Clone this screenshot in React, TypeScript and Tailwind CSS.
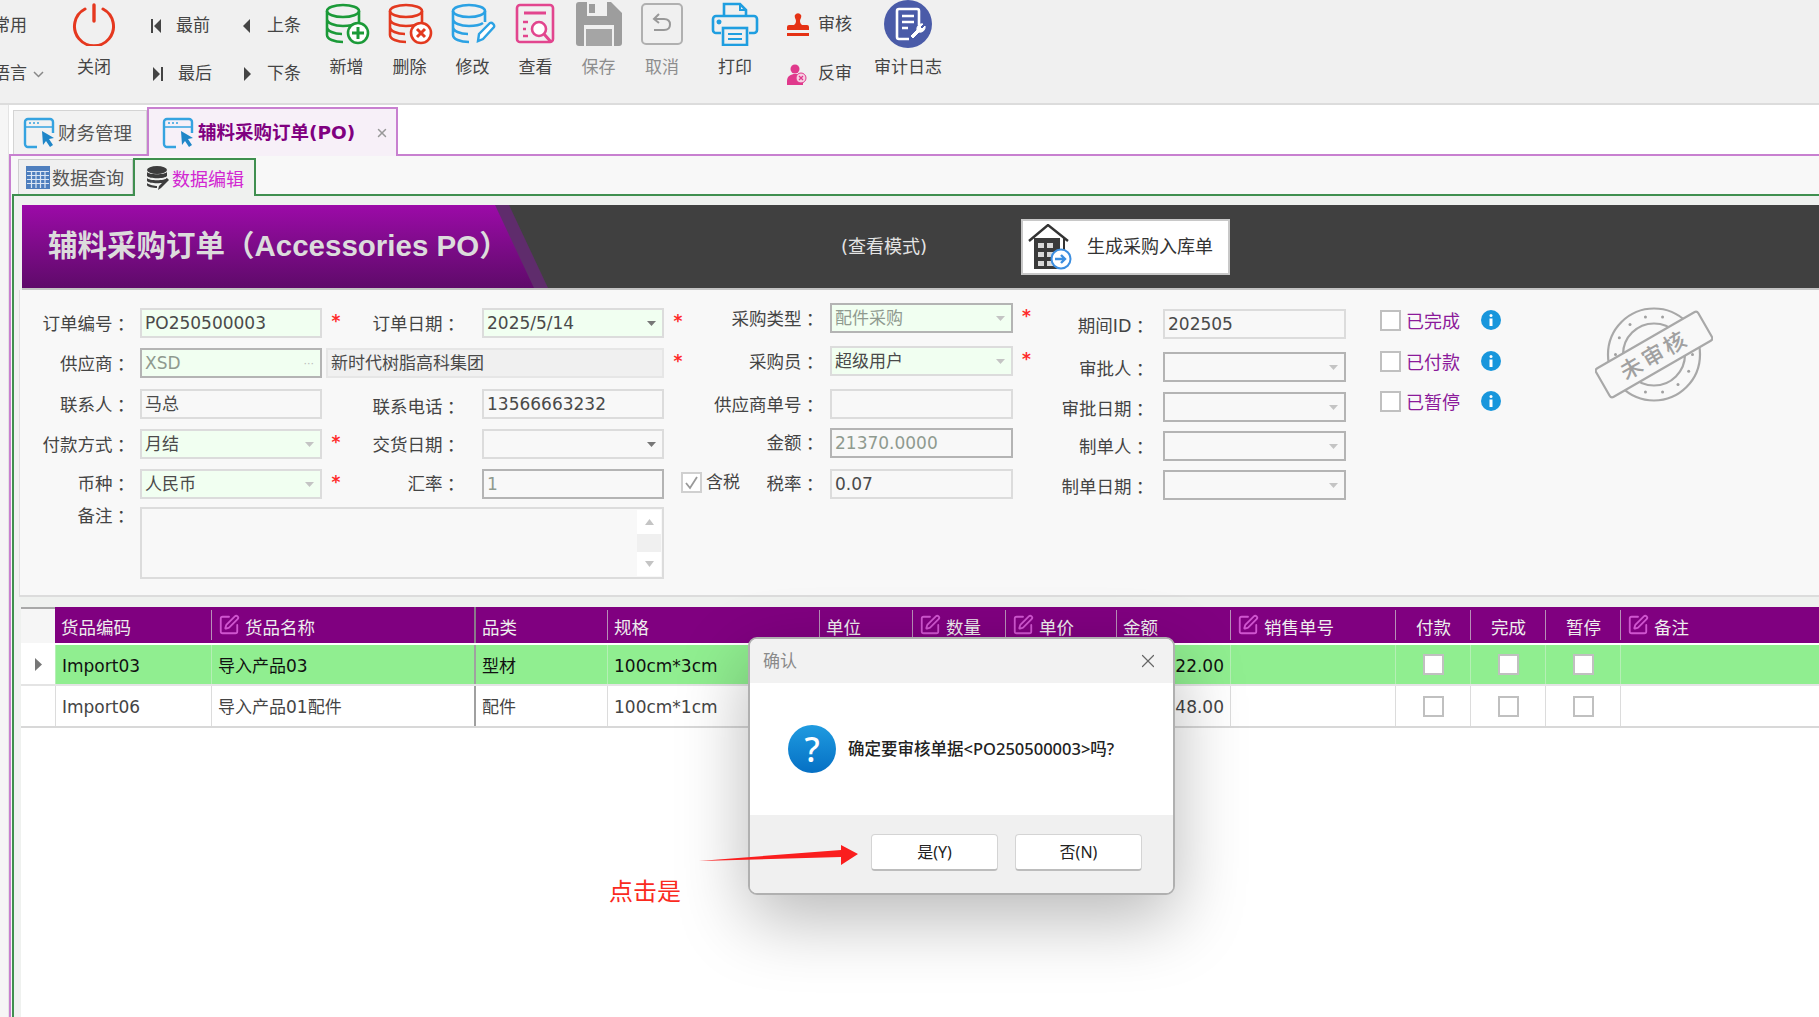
import React from 'react';
import clsx from 'clsx';
import { SquarePen, X } from 'lucide-react';

// 工具栏图标
const PowerIcon = () => (
  <svg width="44" height="44" viewBox="0 0 44 44" fill="none" stroke="#e5381f" strokeWidth="3" strokeLinecap="round">
    <path d="M13 7a19.5 19.5 0 1 0 18 0" />
    <path d="M22 3v16" strokeWidth="3.4" />
  </svg>
);

const DbIcon: React.FC<{ color: string; badge?: 'plus' | 'x' | 'pen' }> = ({ color, badge }) => (
  <svg width="46" height="42" viewBox="0 0 46 42" fill="none" stroke={color} strokeWidth="2.6">
    <ellipse cx="19" cy="8" rx="16" ry="6" />
    <path d="M3 8v24c0 4 7 7 16 7M35 8v11M3 16c0 4 7 7 16 7 6 0 11-1 14-3M3 24c0 4 7 7 15 7" />
    {badge === 'pen' ? (
      <path d="M28 38l1-7 11-11c2-1 5 2 4 4L33 36z" fill="white" strokeWidth="2.4" />
    ) : (
      <>
        <circle cx="34" cy="30" r="10" fill="white" />
        {badge === 'plus' && <path d="M34 24v12M28 30h12" strokeWidth="3" />}
        {badge === 'x' && <path d="M30 26l8 8M38 26l-8 8" strokeWidth="3" />}
      </>
    )}
  </svg>
);

const ViewIcon = () => (
  <svg width="42" height="44" viewBox="0 0 42 44" fill="none" stroke="#e2458e" strokeWidth="2.6">
    <rect x="2" y="3" width="36" height="37" rx="3" />
    <path d="M9 11h22" strokeWidth="3" />
    <path d="M8 20h5M8 27h3M8 34h5" />
    <circle cx="24" cy="27" r="7" fill="white" />
    <path d="M29 32l7 8" strokeWidth="3" />
  </svg>
);

const SaveIcon = () => (
  <svg width="46" height="44" viewBox="0 0 46 44" fill="#9d9d9d">
    <path d="M3 0h32l11 11v30a3 3 0 0 1-3 3H3a3 3 0 0 1-3-3V3a3 3 0 0 1 3-3z" />
    <rect x="11" y="0" width="20" height="14" fill="#f0f0f0" />
    <rect x="13" y="2" width="6" height="9" fill="#9d9d9d" />
    <rect x="8" y="23" width="30" height="21" fill="#f0f0f0" />
    <rect x="10" y="27" width="26" height="17" fill="#a5a5a5" />
  </svg>
);

const CancelIcon = () => (
  <svg width="42" height="42" viewBox="0 0 42 42" fill="none" stroke="#b0b0b0" strokeWidth="2">
    <rect x="1" y="1" width="40" height="40" rx="4" />
    <path d="M18 11l-5 5 5 4" stroke="#999" />
    <path d="M13 16h10c4 0 6 2.500 6 5.500S27 27 23 27H13" stroke="#999" />
  </svg>
);

const PrintIcon = () => (
  <svg width="48" height="44" viewBox="0 0 48 44" fill="none" stroke="#1f9ee0" strokeWidth="2.6">
    <path d="M13 14V2h16l6 6v6" />
    <path d="M29 2v6h6" strokeWidth="2" />
    <path d="M10 31H5a3 3 0 0 1-3-3V17a3 3 0 0 1 3-3h38a3 3 0 0 1 3 3v11a3 3 0 0 1-3 3h-5" />
    <rect x="12" y="26" width="24" height="17" />
    <path d="M17 32h14M17 37h14" strokeWidth="2.2" />
    <circle cx="8" cy="20" r="1.200" fill="#1f9ee0" />
  </svg>
);

const StampRed = () => (
  <svg width="22" height="24" viewBox="0 0 22 24" fill="#e53215">
    <path d="M8 2a3.500 3.500 0 0 1 6 0c1 2-1 4-1 6s1 3 2 4h5a2 2 0 0 1 2 2v3H0v-3a2 2 0 0 1 2-2h5c1-1 2-2 2-4s-2-4-1-6z" />
    <rect x="0" y="20" width="22" height="3" />
  </svg>
);

const UserX = () => (
  <svg width="20" height="21" viewBox="0 0 20 21">
    <circle cx="8" cy="5" r="4.500" fill="#e0398c" />
    <path d="M0 21v-4c0-5 4-7 8-7s8 2 8 7v4z" fill="#e0398c" />
    <circle cx="14" cy="14" r="5" fill="#f6d0e2" stroke="#e0398c" />
    <path d="M12 12l4 4M16 12l-4 4" stroke="#e0398c" strokeWidth="1.300" />
  </svg>
);

const AuditIcon = () => (
  <svg width="48" height="48" viewBox="0 0 48 48" fill="none">
    <circle cx="24" cy="24" r="24" fill="#4a5ba8" />
    <path d="M35 25V11a2 2 0 0 0-2-2H15a2 2 0 0 0-2 2v26a2 2 0 0 0 2 2h10" stroke="white" strokeWidth="2.6" />
    <path d="M18 16h12M18 22h12M18 28h6" stroke="white" strokeWidth="2.4" />
    <path d="M27 36l6-6a5 5 0 0 1 6-6l-3 3 2 2 3-3a5 5 0 0 1-6 6l-6 6z" fill="white" stroke="white" />
  </svg>
);

const WindowIcon = () => (
  <svg width="33" height="32" viewBox="0 0 33 32" fill="none">
    <path d="M14 30H5a3 3 0 0 1-3-3V5a3 3 0 0 1 3-3h22a3 3 0 0 1 3 3v11" stroke="#35a3e0" strokeWidth="2.400" />
    <path d="M2 10h28" stroke="#35a3e0" strokeWidth="1.500" />
    <path d="M6 6h2M10 6h2M14 6h2" stroke="#35a3e0" strokeWidth="1.500" />
    <path d="M19 14l12 7-5 1 4 6-3 2-4-6-3 4z" fill="#1f86c8" />
  </svg>
);

const GridIcon = () => (
  <svg width="24" height="23" viewBox="0 0 24 23">
    <rect width="24" height="23" fill="#4f7fbe" />
    <path d="M1 5.500h22M1 9.500h22M1 13.500h22M1 17.500h22M5.500 5v17M10 5v17M14.500 5v17M19 5v17" stroke="#dbe6f4" strokeWidth="1.200" />
  </svg>
);

const DbDark = () => (
  <svg width="22" height="25" viewBox="0 0 22 25" fill="#3c3c3c">
    <ellipse cx="10" cy="4" rx="10" ry="4" />
    <path d="M0 6c2 3 18 3 20 0v4c-2 3-18 3-20 0zM0 12c2 3 18 3 20 0v3c-2 3-18 3-20 0zM0 17c2 2 8 3 10 3v2c-4 0-10-1-10-3z" />
    <path d="M11 24l1-4 8-8 2 2-8 8z" />
  </svg>
);

const BuildingIcon = () => (
  <svg width="44" height="46" viewBox="0 0 44 46" fill="none">
    <path d="M1 17L20 1l20 16" stroke="#333" strokeWidth="2.400" />
    <path d="M36 14v12" stroke="#333" strokeWidth="2" />
    <rect x="6" y="14" width="26" height="31" fill="#3a3a3a" />
    <path d="M10 19h6v5h-6zM19 19h6v5h-6zM10 28h6v5h-6zM19 28h6v5h-6zM10 37h6v5h-6zM19 37h6v5h-6z" fill="#d8d8d8" />
    <circle cx="33" cy="35" r="9.500" fill="white" stroke="#3b8ee0" strokeWidth="2" />
    <path d="M27 35h10M33 31l4 4-4 4" stroke="#3b8ee0" strokeWidth="2.400" />
  </svg>
);

const InfoIcon = () => (
  <svg width="20" height="20" viewBox="0 0 20 20">
    <circle cx="10" cy="10" r="10" fill="#1896dc" />
    <circle cx="10" cy="5.500" r="1.500" fill="white" />
    <rect x="8.500" y="8.500" width="3" height="7.500" fill="white" />
  </svg>
);

const SealIcon = () => {
  const dots = Array.from({ length: 14 }, (_, i) => (i * Math.PI * 2) / 14);
  return (
    <svg width="118" height="95" viewBox="0 0 118 95" fill="none">
      <circle cx="59" cy="47.500" r="46" stroke="#a8a8a8" strokeWidth="2.200" />
      <circle cx="59" cy="47.500" r="31" stroke="#a8a8a8" strokeWidth="2.200" />
      {dots.map((a) => (
        <circle key={a} cx={59 + 38.500 * Math.cos(a)} cy={47.500 + 38.500 * Math.sin(a)} r="1.500" fill="#a0a0a0" />
      ))}
      <g transform="rotate(-30 59 47.500)">
        <rect x="0" y="31" width="118" height="33" rx="3" fill="#f8f8f8" stroke="#a8a8a8" strokeWidth="2.200" />
        <text x="59" y="56" textAnchor="middle" fontSize="22" fontWeight="500" letterSpacing="3" fill="#a0a0a0" fontFamily="Noto Sans CJK SC, sans-serif">未审核</text>
      </g>
    </svg>
  );
};

// 工具栏按钮
const ToolBtn: React.FC<{ label: string; className: string; gray?: boolean; children: React.ReactNode }> = ({ label, className, gray, children }) => (
  <div className={clsx('flex shrink-0 flex-col items-center', className)}>
    <div className="flex h-[48px] items-center">{children}</div>
    <span className={clsx('mt-[7px] text-[17px] leading-[24px]', gray ? 'text-[#8d8d8d]' : 'text-[#444]')}>{label}</span>
  </div>
);

const Nav: React.FC<{ label: string; d: string; className?: string }> = ({ label, d, className }) => (
  <div className={clsx('flex h-[48px] items-center', className)}>
    <svg width="12" height="16" viewBox="0 0 12 16" fill="#444"><path d={d} /></svg>
    <span className="ml-[14px] text-[17px] text-[#444]">{label}</span>
  </div>
);

const Toolbar = () => (
  <div className="flex h-[105px] shrink-0 overflow-hidden border-b-2 border-[#dcdcdc] bg-[#f0f0f0]">
    <div className="-ml-[7px] w-[71px] shrink-0 pt-[2px] text-[17px] text-[#444]">
      <div className="flex h-[48px] items-center">常用</div>
      <div className="flex h-[48px] items-center">
        语言
        <svg className="ml-[6px]" width="11" height="7" viewBox="0 0 11 7" fill="none" stroke="#888" strokeWidth="1.500"><path d="M1 1l4.500 4.500L10 1" /></svg>
      </div>
    </div>
    <ToolBtn label="关闭" className="w-[60px]"><PowerIcon /></ToolBtn>
    <div className="ml-[26px] w-[91px] shrink-0 pt-[2px]">
      <Nav label="最前" d="M1 1h2v14H1zM11 1v14L4 8z" />
      <Nav label="最后" className="pl-[2px]" d="M9 1h2v14H9zM1 1v14l7-7z" />
    </div>
    <div className="w-[74px] shrink-0 pt-[2px]">
      <Nav label="上条" d="M9 1v14L2 8z" />
      <Nav label="下条" d="M3 1v14l7-7z" />
    </div>
    <ToolBtn label="新增" className="w-[63px]"><DbIcon color="#1b9a38" badge="plus" /></ToolBtn>
    <ToolBtn label="删除" className="w-[63px]"><DbIcon color="#e3391f" badge="x" /></ToolBtn>
    <ToolBtn label="修改" className="w-[63px]"><DbIcon color="#2ca2e4" badge="pen" /></ToolBtn>
    <ToolBtn label="查看" className="w-[63px]"><ViewIcon /></ToolBtn>
    <ToolBtn label="保存" gray className="w-[63px]"><SaveIcon /></ToolBtn>
    <ToolBtn label="取消" gray className="w-[64px]"><CancelIcon /></ToolBtn>
    <ToolBtn label="打印" className="w-[82px]"><PrintIcon /></ToolBtn>
    <div className="ml-[11px] w-[71px] shrink-0 pt-[1px] text-[17px] text-[#444]">
      <div className="flex h-[48px] items-center"><StampRed /><span className="ml-[9px]">审核</span></div>
      <div className="flex h-[50px] items-center"><UserX /><span className="ml-[11px]">反审</span></div>
    </div>
    <ToolBtn label="审计日志" className="w-[100px]"><AuditIcon /></ToolBtn>
  </div>
);

// 表单控件
const Lbl: React.FC<{ text: string; className: string }> = ({ text, className }) => (
  <div className={clsx('flex shrink-0 justify-end whitespace-nowrap pt-[3px] text-[17.5px] text-[#444]', className)}>
    {text}
    <span className="font-['Noto_Sans_CJK_TC',sans-serif]">：</span>
  </div>
);

const Box: React.FC<{
  value?: string;
  className: string;
  green?: boolean;
  dark?: boolean;
  arrow?: 'light' | 'dark';
  dots?: boolean;
  muted?: boolean;
}> = ({ value, className, green, dark, arrow, dots, muted }) => (
  <div
    className={clsx(
      'flex h-[30px] shrink-0 items-center justify-between border-2 pl-[3px] pr-[6px] text-[17px]',
      green ? 'bg-[#f1fff1]' : 'bg-[#f8f8f8]',
      dark ? 'border-[#b4b4b4]' : 'border-[#dcdcdc]',
      muted ? 'text-[#8f9a8f]' : 'text-[#4a4a4a]',
      className,
    )}
  >
    <span className="whitespace-nowrap pt-[2px]">{value}</span>
    {arrow && (
      <svg width="9" height="5" viewBox="0 0 9 5" fill={arrow === 'dark' ? '#777' : '#c4c4c4'}><path d="M0 0h9L4.500 5z" /></svg>
    )}
    {dots && <span className="text-[11px] leading-none text-[#bbb]">···</span>}
  </div>
);

const Star: React.FC<{ className: string }> = ({ className }) => (
  <span className={clsx('-mt-[4px] shrink-0 text-center text-[17px] font-bold leading-none text-[#ff2a2a]', className)}>*</span>
);

const Check: React.FC<{ checked?: boolean; className?: string }> = ({ checked, className }) => (
  <span className={clsx('flex shrink-0 items-center justify-center border-2 border-[#c0c0c0] bg-white', className)}>
    {checked && (
      <svg width="15" height="14" viewBox="0 0 15 14" fill="none" stroke="#999" strokeWidth="1.800"><path d="M2 7l4 5 7-11" /></svg>
    )}
  </span>
);

const Row: React.FC<{ className?: string; children: React.ReactNode }> = ({ className, children }) => (
  <div className={clsx('flex h-[30px] items-center', className)}>{children}</div>
);

const LeftFields = () => (
  <div className="w-[660px] shrink-0 pt-[18px]">
    <Row>
      <Lbl text="订单编号" className="w-[110px]" />
      <Box value="PO250500003" green className="ml-[10px] w-[182px]" />
      <Star className="w-[28px]" />
      <Lbl text="订单日期" className="w-[110px]" />
      <Box value="2025/5/14" green arrow="dark" className="ml-[22px] w-[182px]" />
      <Star className="w-[28px]" />
    </Row>
    <Row className="mt-[10px]">
      <Lbl text="供应商" className="w-[110px]" />
      <Box value="XSD" green dark muted dots className="ml-[10px] w-[182px]" />
      <Box value="新时代树脂高科集团" className="ml-[4px] w-[338px] !bg-[#f0f0f0] !border-[#e6e6e6]" />
      <Star className="w-[28px]" />
    </Row>
    <Row className="mt-[11px]">
      <Lbl text="联系人" className="w-[110px]" />
      <Box value="马总" className="ml-[10px] w-[182px]" />
      <span className="w-[28px] shrink-0" />
      <Lbl text="联系电话" className="w-[110px] !pt-[7px]" />
      <Box value="13566663232" className="ml-[22px] w-[182px]" />
    </Row>
    <Row className="mt-[10px]">
      <Lbl text="付款方式" className="w-[110px]" />
      <Box value="月结" green arrow="light" className="ml-[10px] w-[182px]" />
      <Star className="w-[28px]" />
      <Lbl text="交货日期" className="w-[110px]" />
      <Box arrow="dark" className="ml-[22px] w-[182px]" />
    </Row>
    <Row className="mt-[10px]">
      <Lbl text="币种" className="w-[110px] !pt-0" />
      <Box value="人民币" green arrow="light" className="ml-[10px] w-[182px]" />
      <Star className="w-[28px]" />
      <Lbl text="汇率" className="w-[110px] !pt-0" />
      <Box value="1" dark muted className="ml-[22px] w-[182px]" />
    </Row>
    <div className="mt-[8px] flex">
      <Lbl text="备注" className="-mt-[4px] w-[110px] !pt-0" />
      <div className="ml-[10px] flex h-[72px] w-[524px] justify-end border-2 border-[#dcdcdc] bg-[#f8f8f8] p-[1px]">
        <div className="flex w-[24px] flex-col justify-between bg-[#f0f0f0]">
          <div className="flex h-[24px] items-center justify-center bg-white">
            <svg width="9" height="6" viewBox="0 0 9 6" fill="#c4c4c4"><path d="M0 6h9L4.500 0z" /></svg>
          </div>
          <div className="flex h-[24px] items-center justify-center bg-white">
            <svg width="9" height="6" viewBox="0 0 9 6" fill="#c4c4c4"><path d="M0 0h9L4.500 6z" /></svg>
          </div>
        </div>
      </div>
    </div>
  </div>
);

const ThirdFields = () => (
  <div className="w-[360px] shrink-0 pt-[13px]">
    <Row>
      <Lbl text="采购类型" className="w-[139px]" />
      <Box value="配件采购" green dark muted arrow="light" className="ml-[11px] w-[183px]" />
      <Star className="w-[27px]" />
    </Row>
    <Row className="mt-[13px]">
      <Lbl text="采购员" className="w-[139px]" />
      <Box value="超级用户" green arrow="light" className="ml-[11px] w-[183px]" />
      <Star className="w-[27px]" />
    </Row>
    <Row className="mt-[13px]">
      <Lbl text="供应商单号" className="w-[139px]" />
      <Box className="ml-[11px] w-[183px]" />
    </Row>
    <Row className="mt-[9px]">
      <Lbl text="金额" className="w-[139px] !pt-[1px]" />
      <Box value="21370.0000" dark muted className="ml-[11px] w-[183px]" />
    </Row>
    <Row className="mt-[11px]">
      <div className="flex w-[139px] shrink-0 items-center">
        <Check checked className="-mt-[3px] ml-[1px] h-[21px] w-[21px] !border-[#d0d0d0]" />
        <span className="-mt-[3px] ml-[4px] text-[17px] text-[#444]">含税</span>
        <Lbl text="税率" className="ml-auto !pt-[1px]" />
      </div>
      <Box value="0.07" className="ml-[11px] w-[183px]" />
    </Row>
  </div>
);

const FourthFields = () => (
  <div className="w-[340px] shrink-0 pt-[19px]">
    <Row>
      <Lbl text="期间ID" className="w-[109px] !pt-[4px]" />
      <Box value="202505" className="ml-[14px] w-[183px]" />
    </Row>
    <Row className="mt-[13px]">
      <Lbl text="审批人" className="w-[109px] !pt-[5px]" />
      <Box dark arrow="light" className="ml-[14px] w-[183px]" />
    </Row>
    <Row className="mt-[10px]">
      <Lbl text="审批日期" className="w-[109px] !pt-[5px]" />
      <Box dark arrow="light" className="ml-[14px] w-[183px]" />
    </Row>
    <Row className="mt-[9px]">
      <Lbl text="制单人" className="w-[109px]" />
      <Box dark arrow="light" className="ml-[14px] w-[183px]" />
    </Row>
    <Row className="mt-[9px]">
      <Lbl text="制单日期" className="w-[109px] !pt-[5px]" />
      <Box dark arrow="light" className="ml-[14px] w-[183px]" />
    </Row>
  </div>
);

const Flag: React.FC<{ label: string; className?: string }> = ({ label, className }) => (
  <div className={clsx('flex h-[22px] items-center', className)}>
    <Check className="h-[21px] w-[21px]" />
    <span className="ml-[5px] w-[54px] whitespace-nowrap pt-[2px] text-[18px] text-[#8b1a9a]">{label}</span>
    <span className="ml-[21px]"><InfoIcon /></span>
  </div>
);

// 明细表
const gridCols = 'grid grid-cols-[34px_156px_263px_133px_212px_93px_93px_111px_114px_165px_75px_75px_75px_199px]';

const Th: React.FC<{ label?: string; edit?: boolean; center?: boolean; heavy?: boolean }> = ({ label, edit, center, heavy }) => (
  <div className={clsx('flex h-[36px] items-center', heavy && 'border-l-2 border-[#8a7a8a]')}>
    {!heavy && <span className="h-[30px] w-px shrink-0 bg-[#b78fb7]" />}
    <div className={clsx('flex flex-1 items-center whitespace-nowrap pl-[6px] text-[17.500px] text-[#eee]', center && 'justify-center pl-0 pr-[5px]')}>
      {edit && <SquarePen size={22} strokeWidth={2} className="mr-[5px] shrink-0 text-[#cf55cf]" />}
      <span className="pt-[6px]">{label}</span>
    </div>
  </div>
);

const Td: React.FC<{ value?: string; heavy?: boolean; right?: boolean; line: string; check?: boolean }> = ({ value, heavy, right, line, check }) => (
  <div
    className={clsx(
      'flex h-full items-center whitespace-nowrap border-l pl-[6px] text-[17px]',
      heavy && 'border-l-2 !border-l-[#a0a0a0]',
      right && 'justify-end pr-[6px]',
      check && 'justify-center !pl-0',
      line,
    )}
  >
    {check ? <Check className="h-[21px] w-[21px]" /> : <span className="pt-[4px]">{value}</span>}
  </div>
);

const DataRow: React.FC<{ selected?: boolean; cells: string[] }> = ({ selected, cells }) => {
  const line = selected ? 'border-l-[#b5efb5]' : 'border-l-[#dcdcdc]';
  return (
    <div className={clsx(gridCols, 'border-b-2', selected ? 'h-[41px] border-[#e4e4e4] bg-[#90ee90] text-[#111]' : 'h-[42px] border-[#d8d8d8] text-[#444]')}>
      <div className="flex h-full items-center justify-center bg-white">
        {selected && <svg width="7" height="13" viewBox="0 0 7 13" fill="#777"><path d="M0 0l7 6.500L0 13z" /></svg>}
      </div>
      <Td value={cells[0]} line={line} />
      <Td value={cells[1]} line={line} />
      <Td value={cells[2]} heavy line={line} />
      <Td value={cells[3]} line={line} />
      <Td line={line} />
      <Td line={line} />
      <Td line={line} />
      <Td value={cells[4]} right line={line} />
      <Td line={line} />
      <Td check line={line} />
      <Td check line={line} />
      <Td check line={line} />
      <Td line={line} />
    </div>
  );
};

const DetailTable = () => (
  <div className="ml-[2px] mt-[10px] flex-1 bg-white">
    <div className={clsx(gridCols, 'h-[36px] bg-[#800080]')}>
      <div className="border-t-2 border-[#a8a8a8] bg-[#f6f6f6]" />
      <div className="flex h-[36px] items-center whitespace-nowrap pl-[6px] pt-[6px] text-[17.500px] text-[#eee]">货品编码</div>
      <Th label="货品名称" edit />
      <Th label="品类" heavy />
      <Th label="规格" />
      <Th label="单位" />
      <Th label="数量" edit />
      <Th label="单价" edit />
      <Th label="金额" />
      <Th label="销售单号" edit />
      <Th label="付款" center />
      <Th label="完成" center />
      <Th label="暂停" center />
      <Th label="备注" edit />
    </div>
    <div className="mt-[2px]">
      <DataRow selected cells={['Import03', '导入产品03', '型材', '100cm*3cm', '20322.00']} />
      <DataRow cells={['Import06', '导入产品01配件', '配件', '100cm*1cm', '1048.00']} />
    </div>
  </div>
);

// 确认弹窗
const ConfirmDialog = () => (
  <div className="absolute left-[748px] top-[637px] flex h-[258px] w-[427px] flex-col overflow-hidden rounded-[9px] border-2 border-[#b0b0b0] bg-white font-['Noto_Sans','Noto_Sans_CJK_SC',sans-serif] shadow-[0_24px_70px_rgba(0,0,0,0.28)]">
    <div className="flex h-[44px] shrink-0 items-center justify-between bg-[#f2f2f2] pl-[13px] pr-[14px] text-[17px] text-[#8a8a8a]">
      确认
      <X size={22} strokeWidth={1.300} className="text-[#666]" />
    </div>
    <div className="flex flex-1 items-center pl-[38px]">
      <span className="flex h-[48px] w-[48px] items-center justify-center rounded-full bg-gradient-to-b from-[#1f9be0] to-[#0670c4] text-[34px] font-medium text-white">?</span>
      <span className="ml-[12px] text-[16.500px] font-medium text-[#222]">确定要审核单据&lt;PO250500003&gt;吗?</span>
    </div>
    <div className="flex h-[78px] shrink-0 justify-end gap-[17px] bg-[#f0f0f0] pr-[31px] pt-[19px]">
      <button className="h-[37px] w-[127px] rounded-[4px] border border-[#d4d4d4] border-b-2 border-b-[#bcbcbc] bg-white text-[16px] text-[#222]">是(Y)</button>
      <button className="h-[37px] w-[127px] rounded-[4px] border border-[#d4d4d4] border-b-2 border-b-[#bcbcbc] bg-white text-[16px] text-[#222]">否(N)</button>
    </div>
  </div>
);

export default function App() {
  return (
    <div className="relative flex h-[1017px] w-[1819px] flex-col overflow-hidden bg-white font-['DejaVu_Sans','Noto_Sans_CJK_SC',sans-serif]">
      <Toolbar />
      <div className="flex min-h-0 flex-1">
        <div className="w-[9px] shrink-0 border-r border-[#e4e4e4] bg-[#f6f6f6]" />
        <div className="flex min-w-0 flex-1 flex-col">
          {/* 一级页签 */}
          <div className="flex h-[51px] shrink-0 items-end border-b-2 border-[#c880d0] pl-[4px]">
            <div className="flex h-[44px] w-[134px] items-center gap-[2px] border border-b-0 border-[#d4d4d4] bg-[#f2f2f2] pl-[9px] text-[18.500px] text-[#555]">
              <WindowIcon />
              <span className="pt-[2px]">财务管理</span>
            </div>
            <div className="-mb-[2px] flex h-[49px] w-[251px] items-center border-2 border-b-0 border-[#c880d0] bg-[#f7f0f8] pl-[13px]">
              <WindowIcon />
              <span className="ml-[3px] pt-[1px] text-[18.500px] font-bold text-[#800080]">辅料采购订单(PO)</span>
              <X size={14} strokeWidth={2.500} className="ml-[20px] text-[#999]" />
            </div>
          </div>
          <div className="flex min-h-0 flex-1 flex-col border-l-2 border-[#c880d0] bg-[#f8f8f8] pl-[1px]">
            {/* 二级页签 */}
            <div className="flex h-[40px] shrink-0 items-end border-b-2 border-[#3f8f4f] pl-[6px]">
              <div className="flex h-[35px] w-[115px] items-center gap-[2px] border border-b-0 border-[#cfcfcf] bg-[#f0f0f0] pl-[7px] text-[18px] text-[#555]">
                <GridIcon />
                <span className="pt-[3px]">数据查询</span>
              </div>
              <div className="-mb-[2px] flex h-[38px] w-[123px] items-center gap-[3px] border-2 border-b-0 border-[#3f8f4f] bg-[#eff1ef] pl-[12px] text-[18px] text-[#d226d2]">
                <DbDark />
                <span className="pt-[2px]">数据编辑</span>
              </div>
            </div>
            <div className="flex min-h-0 flex-1 flex-col border-l-2 border-[#3f8f4f] bg-[#eff1ef] pl-[5px] pt-[9px]">
              {/* 标题条 */}
              <div className="relative ml-[3px] flex h-[85px] shrink-0 items-center border-b-2 border-[#c4c4c4] bg-[#404040]">
                <div className="absolute inset-y-0 left-0 w-[526px] bg-[#5f2c6c] [clip-path:polygon(0_0,487px_0,526px_100%,0_100%)]" />
                <div className="absolute inset-y-0 left-0 w-[512px] bg-gradient-to-b from-[#9c0aa8] to-[#5f0a6a] [clip-path:polygon(0_0,473px_0,512px_100%,0_100%)]" />
                <div className="relative w-[819px] shrink-0 whitespace-nowrap pl-[26px] font-['Liberation_Sans','Noto_Sans_CJK_SC',sans-serif] text-[29.500px] font-bold text-[#dcdcdc]">
                  辅料采购订单（Accessories PO）
                </div>
                <div className="relative w-[180px] shrink-0 whitespace-nowrap text-[18px] text-[#e4e4e4]">(查看模式)</div>
                <div className="relative flex h-[56px] w-[209px] shrink-0 items-center border-2 border-[#c8c8c8] bg-white pl-[5px] text-[18px] text-[#333]">
                  <BuildingIcon />
                  <span className="ml-[15px] whitespace-nowrap">生成采购入库单</span>
                </div>
              </div>
              {/* 表单 */}
              <div className="flex h-[307px] shrink-0 border-b-2 border-l border-[#dcdcdc] bg-[#f8f8f8]">
                <LeftFields />
                <ThirdFields />
                <FourthFields />
                <div className="w-[129px] shrink-0 pt-[19px]">
                  <Flag label="已完成" />
                  <Flag label="已付款" className="mt-[19px]" />
                  <Flag label="已暂停" className="mt-[18px]" />
                </div>
                <div className="ml-[86px] mt-[17px] shrink-0">
                  <SealIcon />
                </div>
              </div>
              <DetailTable />
            </div>
          </div>
        </div>
      </div>

      <ConfirmDialog />

      {/* 标注 */}
      <svg className="absolute left-[695px] top-[840px]" width="170" height="30" viewBox="0 0 170 30" fill="#fa1e1e">
        <polygon points="4,21 146,10 146,5 163,14 146,25 146,17" />
      </svg>
      <span className="absolute left-[609px] top-[874px] text-[24px] leading-[36px] text-[#fa2a1e]">点击是</span>
    </div>
  );
}
